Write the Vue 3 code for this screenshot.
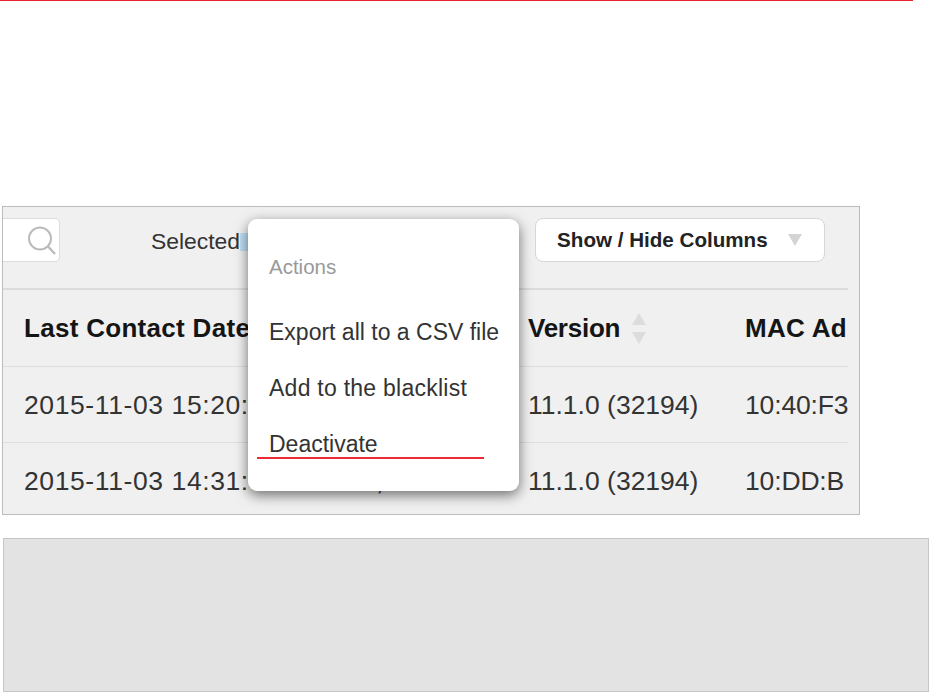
<script setup>
const headers = [
  { label: 'Last Contact Date', sort: false },
  { label: '', sort: false },
  { label: 'Version', sort: true },
  { label: 'MAC Ad', sort: false }
]
const rows = [
  ['2015-11-03 15:20:41', '', '11.1.0 (32194)', '10:40:F3'],
  ['2015-11-03 14:31:52', ',', '11.1.0 (32194)', '10:DD:B']
]
const actions = ['Export all to a CSV file', 'Add to the blacklist', 'Deactivate']
</script>

<template>
  <div class="page">
    <div class="redline"></div>
    <section class="panel">
      <div class="toolbar">
        <div class="search">
          <svg class="search-icon" width="32" height="32" viewBox="0 0 32 32" fill="none" stroke="#bbb">
            <circle cx="16" cy="14.5" r="11" stroke-width="2" />
            <path d="M24 22.5 L31 30" stroke-width="2.4" />
          </svg>
        </div>
        <span class="selected">Selected</span>
        <span class="selected-btn"></span>
        <button class="columns-btn">
          <span>Show / Hide Columns</span>
          <svg width="14" height="12" viewBox="0 0 14 12"><path d="M0 0H14L7 12Z" fill="#d4d4d4" /></svg>
        </button>
      </div>
      <div class="table">
        <div class="row head">
          <div v-for="(h, i) in headers" :key="i" class="cell">
            {{ h.label }}
            <svg v-if="h.sort" class="sort" width="14" height="31" viewBox="0 0 14 31">
              <path d="M7 0L14 12H0Z" fill="#dcdcdc" />
              <path d="M0 19H14L7 31Z" fill="#dcdcdc" />
            </svg>
          </div>
        </div>
        <div v-for="(r, ri) in rows" :key="ri" class="row body">
          <div v-for="(c, ci) in r" :key="ci" class="cell">{{ c }}</div>
        </div>
      </div>
      <div class="menu">
        <div class="menu-title">Actions</div>
        <div v-for="a in actions" :key="a" class="menu-item">{{ a }}</div>
        <div class="annotation"></div>
      </div>
    </section>
    <div class="note"></div>
  </div>
</template>

<style scoped>
.page {
  width: 929px;
  height: 692px;
  overflow: hidden;
  background: #fff;
  font-family: "Liberation Sans", Arial, sans-serif;
}
.redline {
  width: 913px;
  height: 1px;
  background: #e8232f;
  margin-bottom: 205px;
}
.panel {
  position: relative;
  box-sizing: border-box;
  width: 858px;
  height: 309px;
  margin-left: 2px;
  background: #f0f0f0;
  border: 1px solid #bcbcbc;
  overflow: hidden;
}
.toolbar {
  display: flex;
  align-items: flex-start;
  height: 81px;
  padding-top: 11px;
  box-sizing: border-box;
}
.search {
  box-sizing: border-box;
  width: 80px;
  height: 44px;
  margin-left: -23px;
  background: #fff;
  border: 1px solid #dcdcdc;
  border-radius: 5px;
  display: flex;
  justify-content: flex-end;
  align-items: center;
  padding-right: 3px;
}
.selected {
  margin-left: 91px;
  margin-top: 11px;
  font-size: 22.9px;
  line-height: 24px;
  color: #333;
}
.selected-btn {
  width: 40px;
  height: 18px;
  margin-top: 15px;
  background: #bfe0f5;
  flex: none;
}
.columns-btn {
  box-sizing: border-box;
  width: 290px;
  height: 44px;
  margin-left: 255px;
  background: #fff;
  border: 1px solid #d6d6d6;
  border-radius: 8px;
  display: flex;
  align-items: center;
  padding: 0 21px;
  gap: 20px;
  font-family: inherit;
  font-size: 20.6px;
  font-weight: 700;
  color: #222;
  flex: none;
}
.table {
  width: 845px;
  overflow: hidden;
  border-top: 2px solid #dcdcdc;
}
.row {
  display: grid;
  grid-template-columns: 357px 168px 217px 103px;
  white-space: nowrap;
}
.cell {
  overflow: hidden;
  display: flex;
  align-items: center;
}
.head {
  height: 76px;
  font-size: 26px;
  font-weight: 700;
  color: #151515;
  border-bottom: 1px solid #dedede;
}
.head .cell:first-child,
.head .cell:last-child {
  letter-spacing: 0.3px;
}
.head .cell:nth-child(3) {
  letter-spacing: -0.25px;
}
.body {
  box-sizing: border-box;
  height: 75px;
  padding-top: 2px;
  font-size: 26.5px;
  color: #333;
}
.body .cell:first-child {
  letter-spacing: 0.6px;
}
.body .cell:last-child {
  letter-spacing: -0.15px;
}
.body + .body {
  height: 76px;
  border-top: 1px solid #dedede;
}
.row .cell:first-child {
  padding-left: 21px;
}
.row .cell:nth-child(2) {
  padding-left: 16px;
}
.sort {
  margin-left: 12px;
}
.menu {
  position: absolute;
  left: 245px;
  top: 12px;
  box-sizing: border-box;
  width: 271px;
  height: 272px;
  padding: 35px 21px 0;
  background: #fff;
  border-radius: 9px;
  box-shadow: 0 4px 13px rgba(0, 0, 0, 0.55);
}
.menu-title {
  font-size: 20.5px;
  line-height: 26px;
  color: #999;
  margin-bottom: 24px;
}
.menu-item {
  font-size: 23px;
  line-height: 56px;
  color: #333;
  white-space: nowrap;
}
.menu-item:nth-child(3) {
  letter-spacing: 0.25px;
}
.annotation {
  position: absolute;
  left: 9px;
  top: 238px;
  width: 227px;
  height: 2px;
  background: #ee2a36;
}
.note {
  box-sizing: border-box;
  width: 926px;
  height: 154px;
  margin: 23px 0 0 3px;
  background: #e3e3e3;
  border: 1px solid #c6c6c6;
}
</style>
